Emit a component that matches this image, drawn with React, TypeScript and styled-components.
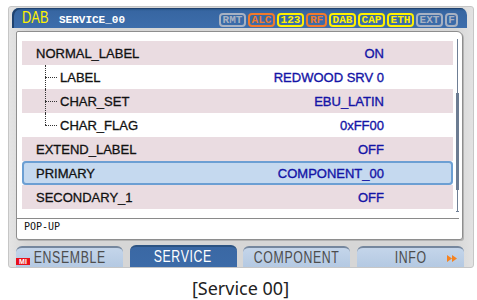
import React from "react";
import styled, { createGlobalStyle, css } from "styled-components";

type Row = {
  label: string;
  value: string;
  child?: boolean;
  last?: boolean;
  selected?: boolean;
};

type Flag = { text: string; tone: "gray" | "orange" | "yellow"; w?: number };

const rows: Row[] = [
  { label: "NORMAL_LABEL", value: "ON" },
  { label: "LABEL", value: "REDWOOD SRV 0", child: true },
  { label: "CHAR_SET", value: "EBU_LATIN", child: true },
  { label: "CHAR_FLAG", value: "0xFF00", child: true, last: true },
  { label: "EXTEND_LABEL", value: "OFF" },
  { label: "PRIMARY", value: "COMPONENT_00", selected: true },
  { label: "SECONDARY_1", value: "OFF" },
];

const flags: Flag[] = [
  { text: "RMT", tone: "gray" },
  { text: "ALC", tone: "orange" },
  { text: "123", tone: "yellow" },
  { text: "RF", tone: "orange", w: 21 },
  { text: "DAB", tone: "yellow" },
  { text: "CAP", tone: "yellow" },
  { text: "ETH", tone: "yellow" },
  { text: "EXT", tone: "gray" },
  { text: "F", tone: "gray", w: 13 },
];

const tones = {
  gray: "#a7b1c2",
  orange: "#f07a2c",
  yellow: "#fff000",
};

const tabs = ["ENSEMBLE", "SERVICE", "COMPONENT", "INFO"];

const GlobalStyle = createGlobalStyle`
  html, body {
    margin: 0;
    padding: 0;
    background: #ffffff;
  }
  body {
    font-family: "Liberation Sans", Arial, sans-serif;
  }
`;

const Page = styled.div`
  width: 477px;
  height: 300px;
  overflow: hidden;
`;

const Frame = styled.div`
  margin: 6px 0 0 8px;
  width: 466px;
  height: 262px;
  box-sizing: border-box;
  background: linear-gradient(90deg, #e4e4e4, #d6d6d6 4%, #d6d6d6 96%, #e2e2e2);
  border: 1px solid #c6c6c6;
  border-radius: 3px;
  padding: 1px 6px 0 3px;
  display: flex;
  flex-direction: column;
`;

const Header = styled.div`
  height: 20px;
  box-sizing: border-box;
  padding: 3px 9px 0 10px;
  display: flex;
  align-items: center;
  border-radius: 7px 7px 0 0;
  background: linear-gradient(#24507f 0, #3766a2 3px, #3d6dab 100%);
  box-shadow: inset 2px 1px 0 #1f426f;
`;

const Mode = styled.span`
  display: inline-block;
  width: 26px;
  color: #fff200;
  font-size: 17px;
  line-height: 16px;
  transform: scaleX(0.76);
  transform-origin: left center;
  margin-top: -3px;
`;

const Title = styled.span`
  margin-left: 11px;
  color: #ffffff;
  font-family: "Liberation Mono", monospace;
  font-weight: bold;
  font-size: 11px;
  line-height: 10px;
`;

const Flags = styled.div`
  margin-left: auto;
  display: flex;
  gap: 2px;
`;

const Badge = styled.span<{ $tone: Flag["tone"]; $w: number }>`
  width: ${(p) => p.$w}px;
  height: 14px;
  box-sizing: border-box;
  border: 2px solid ${(p) => tones[p.$tone]};
  border-radius: 4px;
  color: ${(p) => tones[p.$tone]};
  font-family: "Liberation Mono", monospace;
  font-weight: bold;
  font-size: 11px;
  line-height: 10px;
  display: flex;
  align-items: center;
  justify-content: center;
`;

const Panel = styled.div`
  margin: 3px 0 0 4px;
  width: 447px;
  height: 209px;
  box-sizing: border-box;
  background: #ffffff;
  border: 1px solid #8e8e8e;
  border-radius: 2px 6px 3px 3px;
  box-shadow: 1px 1px 0 #b4b4b4;
  padding-top: 9px;
`;

const Body = styled.div`
  display: flex;
  padding-left: 5px;
`;

const List = styled.div`
  width: 431px;
`;

const RowLine = styled.div<{ $shade: boolean; $selected: boolean; $child: boolean }>`
  height: 24px;
  box-sizing: border-box;
  display: flex;
  align-items: center;
  padding: 0 69px 0 ${(p) => (p.$child ? 23 : 14)}px;
  background: ${(p) => (p.$shade ? "#eadce1" : "#ffffff")};
  font-size: 13px;
  -webkit-text-stroke: 0.3px currentColor;
  ${(p) =>
    p.$selected &&
    css`
      background: #c5d9ef;
      border-radius: 4px;
      box-shadow: inset 0 0 0 2px #6c9fd3;
    `}
`;

const Guide = styled.span<{ $last: boolean }>`
  position: relative;
  width: 13px;
  height: 24px;
  flex-shrink: 0;
  margin-right: 2px;
  &::before {
    content: "";
    position: absolute;
    left: 0;
    top: 0;
    height: ${(p) => (p.$last ? "12px" : "24px")};
    border-left: 1px dotted #333;
  }
  &::after {
    content: "";
    position: absolute;
    left: 0;
    top: 12px;
    width: 12px;
    border-top: 1px dotted #333;
  }
`;

const Label = styled.span`
  color: #111111;
  -webkit-text-stroke: 0.3px #111111;
`;

const Value = styled.span`
  margin-left: auto;
  color: #1414a6;
  -webkit-text-stroke: 0.35px #1414a6;
`;

const Scroll = styled.div`
  position: relative;
  margin: -2px 0 0 3px;
  width: 3px;
  height: 173px;
  &::before {
    content: "";
    position: absolute;
    left: 1px;
    top: 0;
    bottom: 0;
    width: 1px;
    background: #6f7f95;
  }
  &::after {
    content: "";
    position: absolute;
    left: 0;
    bottom: 0;
    width: 3px;
    height: 1px;
    background: #6f7f95;
  }
`;

const Thumb = styled.div`
  position: absolute;
  left: 0;
  width: 3px;
  background: #6c7c92;
`;

const Divider = styled.div`
  margin: 6px 3px 0 0;
  height: 1px;
  background: #8a8a8a;
`;

const Popup = styled.div`
  padding: 3px 0 0 7px;
  font-family: "DejaVu Sans Mono", monospace;
  font-size: 10px;
  line-height: 10px;
  color: #111;
`;

const Tabs = styled.div`
  margin: 5px 0 0 4px;
  display: grid;
  grid-template-columns: repeat(4, 107px);
  column-gap: 6.7px;
  align-items: end;
`;

const Tab = styled.div<{ $active: boolean }>`
  position: relative;
  height: ${(p) => (p.$active ? 22 : 21)}px;
  box-sizing: border-box;
  border-radius: 6px 6px 0 0;
  border-top: 2px solid ${(p) => (p.$active ? "#2c5382" : "#75879e")};
  background: ${(p) =>
    p.$active
      ? "linear-gradient(#3a68a4, #3c6ba8)"
      : "linear-gradient(#c4d5ea, #b4c9e2)"};
  color: ${(p) => (p.$active ? "#ffffff" : "#4d4d4d")};
  display: flex;
  align-items: center;
  justify-content: center;
`;

const TabText = styled.span`
  display: inline-block;
  font-size: 16px;
  line-height: 16px;
  letter-spacing: 0.8px;
  transform: scaleX(0.77);
`;

const Mi = styled.span`
  position: absolute;
  left: 0;
  bottom: 2px;
  width: 14px;
  height: 7px;
  background: #e8101c;
  color: #fff;
  font-size: 7px;
  line-height: 7px;
  font-weight: bold;
  text-align: center;
`;

const More = styled.svg`
  position: absolute;
  right: 7px;
  top: 7px;
`;

const Caption = styled.div`
  margin-top: 9px;
  padding-left: 4px;
  text-align: center;
  font-family: "Noto Sans", "Open Sans", sans-serif;
  font-size: 18px;
  line-height: 22px;
  color: #222;
`;

export default function App() {
  return (
    <Page>
      <GlobalStyle />
      <Frame>
        <Header>
          <Mode>DAB</Mode>
          <Title>SERVICE_00</Title>
          <Flags>
            {flags.map((f) => (
              <Badge key={f.text} $tone={f.tone} $w={f.w ?? 27}>
                {f.text}
              </Badge>
            ))}
          </Flags>
        </Header>
        <Panel>
          <Body>
            <List>
              {rows.map((r, i) => (
                <RowLine
                  key={r.label}
                  $shade={i % 2 === 0}
                  $selected={!!r.selected}
                  $child={!!r.child}
                >
                  {r.child && <Guide $last={!!r.last} />}
                  <Label>{r.label}</Label>
                  <Value>{r.value}</Value>
                </RowLine>
              ))}
            </List>
            <Scroll>
              <Thumb style={{ top: 54, height: 97 }} />
            </Scroll>
          </Body>
          <Divider />
          <Popup>POP-UP</Popup>
        </Panel>
        <Tabs>
          {tabs.map((t) => (
            <Tab key={t} $active={t === "SERVICE"}>
              {t === "ENSEMBLE" && <Mi>MI</Mi>}
              <TabText>{t}</TabText>
              {t === "INFO" && (
                <More width="10" height="7" viewBox="0 0 10 7">
                  <path d="M0 0 L5 3.5 L0 7 Z M5 0 L10 3.5 L5 7 Z" fill="#f58220" />
                </More>
              )}
            </Tab>
          ))}
        </Tabs>
      </Frame>
      <Caption>[Service 00]</Caption>
    </Page>
  );
}
